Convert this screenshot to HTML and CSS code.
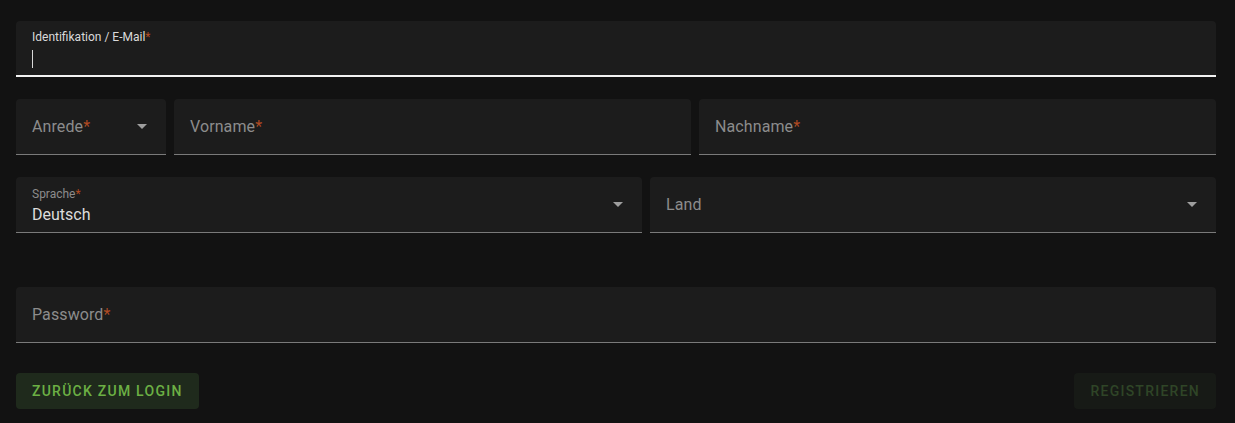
FILE: index.html
```html
<!DOCTYPE html>
<html lang="de">
<head>
<meta charset="utf-8">
<title>Registrieren</title>
<link rel="stylesheet" href="styles.css">
</head>
<body>
<form class="form">
  <div class="row">
    <div class="field focused grow">
      <label class="label small">Identifikation / E-Mail<span class="req">*</span></label>
      <div class="value"><span class="caret"></span></div>
    </div>
  </div>
  <div class="row">
    <div class="field select anrede">
      <span class="label">Anrede<span class="req">*</span></span>
      <svg class="arrow" viewBox="0 0 10 5" width="10" height="5"><path d="M0 0h10L5 5z"/></svg>
    </div>
    <div class="field grow">
      <span class="label">Vorname<span class="req">*</span></span>
    </div>
    <div class="field grow">
      <span class="label">Nachname<span class="req">*</span></span>
    </div>
  </div>
  <div class="row">
    <div class="field select sprache">
      <div class="stack">
        <span class="label small">Sprache<span class="req">*</span></span>
        <span class="value text">Deutsch</span>
      </div>
      <svg class="arrow" viewBox="0 0 10 5" width="10" height="5"><path d="M0 0h10L5 5z"/></svg>
    </div>
    <div class="field select grow">
      <span class="label">Land</span>
      <svg class="arrow" viewBox="0 0 10 5" width="10" height="5"><path d="M0 0h10L5 5z"/></svg>
    </div>
  </div>
  <div class="row pw">
    <div class="field grow">
      <span class="label">Password<span class="req">*</span></span>
    </div>
  </div>
  <div class="actions">
    <button type="button" class="btn tonal">Zurück zum Login</button>
    <button type="button" class="btn disabled">Registrieren</button>
  </div>
</form>
</body>
</html>
```

FILE: styles.css
```css
* { box-sizing: border-box; }
html, body { margin: 0; padding: 0; }
body {
  background: #121212;
  font-family: Roboto, "Liberation Sans", sans-serif;
  color: #e6e6e6;
}
.form {
  padding: 21px 19px 0 16px;
  display: flex;
  flex-direction: column;
}
.row {
  display: flex;
  gap: 8px;
  margin-bottom: 22px;
}
.row.pw { margin-top: 32px; margin-bottom: 30px; }
.field {
  height: 56px;
  background: #1c1c1c;
  border-radius: 4px 4px 0 0;
  border-bottom: 1px solid #7a7a7a;
  padding: 0 16px;
  display: flex;
  align-items: center;
  position: relative;
}
.grow { flex: 1 1 0; }
.anrede { width: 150px; flex: 0 0 150px; }
.sprache { width: 626px; flex: 0 0 626px; }
.select { justify-content: space-between; padding-right: 19px; }
.label {
  font-size: 16px;
  color: #8c8c8c;
  line-height: 20px;
  letter-spacing: 0.1px;
}
.label.small {
  font-size: 12px;
  line-height: 14px;
  letter-spacing: 0;
}
.req { color: #b04a22; }
.focused {
  flex-direction: column;
  align-items: flex-start;
  justify-content: flex-start;
  padding-top: 9px;
  border-bottom: 2px solid #f2f2f2;
}
.focused .label { color: #dadada; }
.focused .value { margin-top: 6px; height: 18px; }
.caret {
  display: block;
  width: 1px;
  height: 18px;
  background: #d8d8d8;
}
.stack {
  display: flex;
  flex-direction: column;
  padding-top: 2px;
}
.stack .label { margin-bottom: 4px; }
.text {
  font-size: 16px;
  line-height: 20px;
  color: #dcdcdc;
}
.arrow { fill: #9e9e9e; flex: 0 0 auto; }
.actions {
  display: flex;
  justify-content: space-between;
}
.btn {
  height: 36px;
  border: 0;
  border-radius: 4px;
  padding: 0 16px;
  font-family: Roboto, "Liberation Sans", sans-serif;
  font-size: 14px;
  font-weight: 500;
  letter-spacing: 1.25px;
  text-transform: uppercase;
}
.tonal {
  background: #1f2a1c;
  color: #6cb044;
}
.disabled {
  background: #171a16;
  color: #2f4527;
}
```
